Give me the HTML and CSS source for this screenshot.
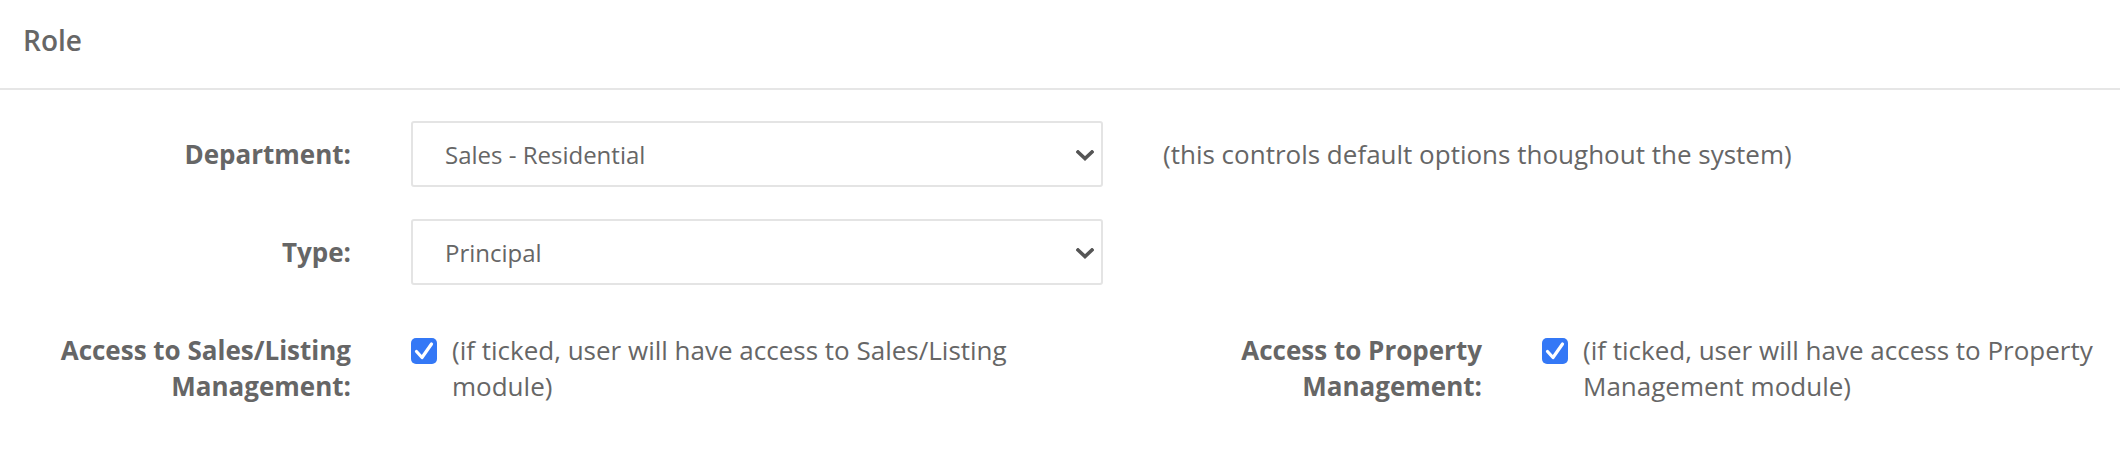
FILE: index.html
```html
<!DOCTYPE html>
<html lang="en">

<head>
    <meta charset="UTF-8">
    <meta name="viewport" content="width=device-width, initial-scale=1.0">
    <title>Role</title>
    <link rel="stylesheet" href="styles.css">
</head>

<body>
    <div class="panel">
        <div class="panelHeading">Role</div>
        <div class="panelBody">
            <div class="formGrid">
                <!-- DEPARTAMENTO -->
                <label class="fieldLabel" for="department">Department:</label>
                <div class="selectWrap">
                    <select id="department">
                        <option>Sales - Residential</option>
                        <option>Sales - Commercial</option>
                        <option>Property Management</option>
                    </select>
                    <svg class="chevron" width="18" height="11" viewBox="0 0 18 11">
                        <path d="M2 2 L9 8.5 L16 2" fill="none" stroke="#555" stroke-width="3.6" stroke-linecap="square"/>
                    </svg>
                </div>
                <div class="helpText">(this controls default options thoughout the system)</div>

                <!-- TIPO -->
                <label class="fieldLabel" for="type">Type:</label>
                <div class="selectWrap">
                    <select id="type">
                        <option>Principal</option>
                        <option>Agent</option>
                        <option>Admin</option>
                    </select>
                    <svg class="chevron" width="18" height="11" viewBox="0 0 18 11">
                        <path d="M2 2 L9 8.5 L16 2" fill="none" stroke="#555" stroke-width="3.6" stroke-linecap="square"/>
                    </svg>
                </div>
                <div class="helpText"></div>

                <!-- ACCESOS -->
                <label class="fieldLabel accessRow">Access to Sales/Listing Management:</label>
                <div class="checkField accessRow">
                    <span class="checkBox">
                        <svg width="26" height="26" viewBox="0 0 26 26">
                            <path d="M5.5 13.5 L11 19.5 L20.5 6" fill="none" stroke="#fff" stroke-width="3.2" stroke-linecap="round" stroke-linejoin="round"/>
                        </svg>
                    </span>
                    <span class="checkText">(if ticked, user will have access to Sales/Listing module)</span>
                </div>
                <label class="fieldLabel accessRow">Access to Property Management:</label>
                <div class="checkField accessRow">
                    <span class="checkBox">
                        <svg width="26" height="26" viewBox="0 0 26 26">
                            <path d="M5.5 13.5 L11 19.5 L20.5 6" fill="none" stroke="#fff" stroke-width="3.2" stroke-linecap="round" stroke-linejoin="round"/>
                        </svg>
                    </span>
                    <span class="checkText">(if ticked, user will have access to Property Management module)</span>
                </div>
            </div>
        </div>
    </div>
</body>

</html>
```

FILE: styles.css
```css
body {
    margin: 0px;
    padding: 0px;
    background-color: white;
    font-family: "Open Sans", Arial, sans-serif;
    color: #666;

    .panelHeading {
        height: 88px;
        line-height: 80px;
        padding: 0px 23px;
        font-size: 28px;
        font-weight: 600;
        border-bottom: 2px solid #e6e6e6;
    }

    .panelBody {
        padding-top: 31px;
    }

    .formGrid {
        display: grid;
        grid-template-columns: 351px 692px 319px 1fr;
        column-gap: 60px;
        row-gap: 32px;
        font-size: 26px;
        line-height: 36px;

        .fieldLabel {
            align-self: center;
            text-align: right;
            font-weight: bold;
        }

        .selectWrap {
            position: relative;

            select {
                appearance: none;
                -webkit-appearance: none;
                display: block;
                width: 100%;
                height: 66px;
                padding: 0px 32px;
                border: 2px solid #e4e4e4;
                border-radius: 3px;
                background-color: white;
                font-family: inherit;
                font-size: 24px;
                color: #666;
            }

            .chevron {
                position: absolute;
                right: 9px;
                top: 29px;
                pointer-events: none;
            }
        }

        .helpText {
            align-self: center;
            grid-column: 3 / 5;
        }

        .accessRow {
            align-self: start;
            margin-top: 15px;
        }

        .checkField {
            display: flex;
            align-items: flex-start;
            gap: 15px;
            padding-right: 20px;

            .checkBox {
                flex: none;
                width: 26px;
                height: 26px;
                margin-top: 6px;
                border-radius: 5px;
                background-color: #3478f6;

                svg {
                    display: block;
                }
            }
        }
    }
}
```
